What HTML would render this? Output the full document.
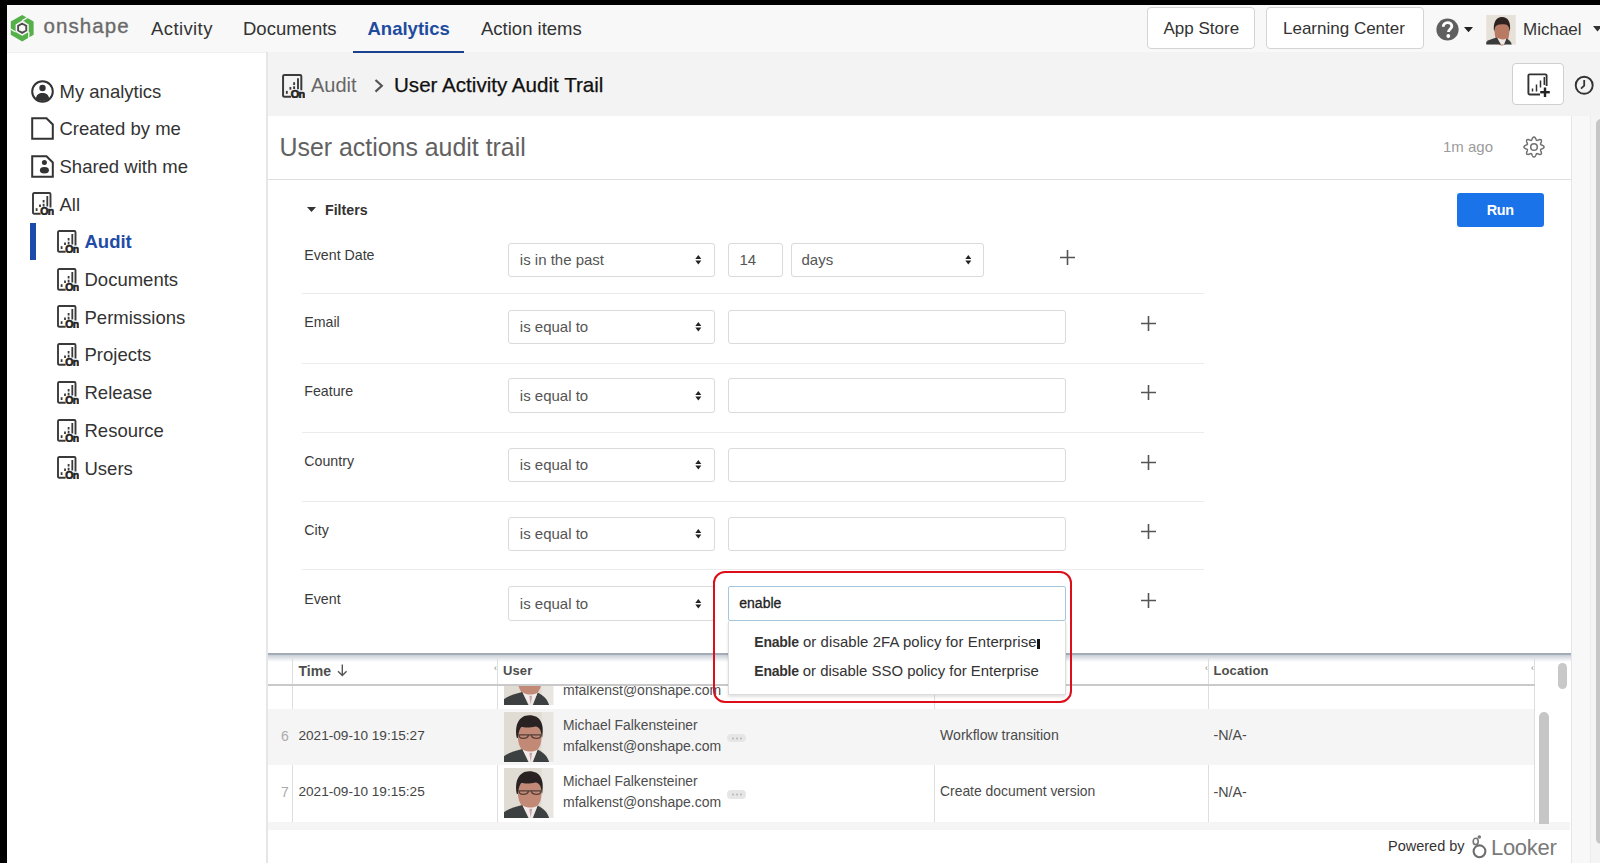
<!DOCTYPE html>
<html><head><meta charset="utf-8">
<style>
*{box-sizing:border-box;margin:0;padding:0}
html,body{width:1600px;height:863px;overflow:hidden;background:#fff;font-family:"Liberation Sans",sans-serif}
.a{position:absolute}
.t{position:absolute;white-space:nowrap;line-height:1}
svg{position:absolute;overflow:visible}
</style></head><body>
<!-- black frame -->
<div class="a" style="left:0;top:0;width:1600px;height:5px;background:#000"></div>
<div class="a" style="left:0;top:0;width:7px;height:863px;background:#000"></div>

<!-- header -->
<div class="a" style="left:7px;top:5px;width:1593px;height:47px;background:#f8f8f8"></div>
<div class="a" style="left:7px;top:52px;width:260px;height:1px;background:#efefef"></div>

<!-- onshape logo -->
<svg style="left:9.3px;top:14.8px" width="26.4" height="26.4" viewBox="-13.2 -13.2 26.4 26.4">
  <path fill="#55b04a" fill-rule="evenodd" d="M0,-13.2 L11.43,-6.6 L11.43,6.6 L0,13.2 L-11.43,6.6 L-11.43,-6.6Z M0,-7.6 L6.58,-3.8 L6.58,3.8 L0,7.6 L-6.58,3.8 L-6.58,-3.8Z"/>
  <g stroke="#f8f8f8" stroke-width="1.3">
    <line x1="0" y1="-7.6" x2="7.5" y2="-11.9"/>
    <line x1="-6.58" y1="3.8" x2="-13" y2="0.1"/>
    <line x1="6.58" y1="3.8" x2="6.58" y2="12"/>
  </g>
  <path d="M0,-4.7 L4.07,-2.35 L4.07,2.35 L0,4.7 L-4.07,2.35 L-4.07,-2.35Z" fill="none" stroke="#4d4d4d" stroke-width="1.9"/>
  <line x1="0.6" y1="-5.3" x2="2.5" y2="-6.4" stroke="#f8f8f8" stroke-width="1.2"/>
</svg>
<div class="t" style="left:43.5px;top:15.6px;font-size:20.5px;color:#6b6b6b;letter-spacing:1.1px;-webkit-text-stroke:0.35px #6b6b6b">onshape</div>

<div class="t" style="left:151px;top:19.6px;font-size:18.5px;color:#333;letter-spacing:0.4px">Activity</div>
<div class="t" style="left:243px;top:19.6px;font-size:18.5px;color:#333">Documents</div>
<div class="t" style="left:367.5px;top:19.6px;font-size:18.5px;color:#1f4c9e;font-weight:bold">Analytics</div>
<div class="a" style="left:353px;top:50.5px;width:111px;height:2.5px;background:#1a4190"></div>
<div class="t" style="left:481px;top:19.6px;font-size:18.5px;color:#333">Action items</div>

<div class="a" style="left:1147px;top:7px;width:108px;height:41.5px;background:#fff;border:1px solid #d4d4d4;border-radius:4px"></div>
<div class="t" style="left:1163.5px;top:19.6px;font-size:17px;color:#333">App Store</div>
<div class="a" style="left:1266px;top:7px;width:157.5px;height:41.5px;background:#fff;border:1px solid #d4d4d4;border-radius:4px"></div>
<div class="t" style="left:1283px;top:19.6px;font-size:17px;color:#333">Learning Center</div>

<!-- help icon -->
<svg style="left:1436px;top:18px" width="23" height="23" viewBox="0 0 23 23">
  <circle cx="11.5" cy="11.5" r="11.1" fill="#5f5f5f"/>
  <path d="M7.3,8.8 C7.3,6.2 9.2,4.6 11.6,4.6 C14,4.6 15.8,6.1 15.8,8.3 C15.8,10.8 12.5,11.2 12.5,14" fill="none" stroke="#fff" stroke-width="2.9"/>
  <circle cx="12.3" cy="18" r="1.9" fill="#fff"/>
</svg>
<svg style="left:1464px;top:26.6px" width="10" height="6"><polygon points="0,0 9,0 4.5,5.2" fill="#222"/></svg>
<!-- avatar small -->
<svg style="left:1486px;top:14.5px" width="30" height="29.5" viewBox="0 0 30 30">
  <rect width="30" height="30" fill="#e6e1d9"/>
  <path d="M8.5,15 C8.5,24 11,31 16,31 C21,31 23.5,24 23.5,15 C22,9 20,8 16,8 C12,8 10,9 8.5,15Z" fill="#b97a64"/>
  <path d="M8,17 C6.5,8 10,2 16,2 C22,2 25.5,7 24,17 L23,13 C22,10 20,9 16,9.5 C12,9.5 10,10.5 9,13Z" fill="#2e2320"/>
  <path d="M0,30 V27.5 C3,25 7,24 11,23 L15,30Z" fill="#3a3c3b"/>
  <path d="M26,30 C25,27 23,25 20.5,24 L18,30Z" fill="#3a3c3b"/>
  <path d="M11,23 L15,30 L18,30 L20.5,24 C18,25.5 13,25 11,23Z" fill="#eee8e6"/>
</svg>
<div class="t" style="left:1523px;top:20.9px;font-size:17px;color:#333">Michael</div>
<svg style="left:1593px;top:26px" width="10" height="6"><polygon points="0,0 9,0 4.5,5.5" fill="#333"/></svg>

<!-- sidebar -->
<div class="a" style="left:266px;top:52px;width:2px;height:811px;background:#e4e6ea"></div>

<!-- breadcrumb bar -->
<div class="a" style="left:268px;top:52px;width:1332px;height:63.5px;background:#f3f3f3"></div>
<div class="a" style="left:353px;top:50.5px;width:111px;height:2.5px;background:#1a4190"></div>

<!-- content area right gutter -->
<div class="a" style="left:1571px;top:115.5px;width:29px;height:748px;background:#f8f8f8"></div>
<div class="a" style="left:1571px;top:115.5px;width:1px;height:748px;background:#e6e6e6"></div>
<div class="a" style="left:1590px;top:115.5px;width:1px;height:748px;background:#ececec"></div>
<div class="a" style="left:1591px;top:115.5px;width:9px;height:748px;background:#f4f4f4"></div>
<div class="a" style="left:1595.5px;top:119px;width:10px;height:725px;background:#c6c6c6;border-radius:5px"></div>


<!-- icon defs -->
<svg width="0" height="0" style="position:absolute">
 <defs>
  <symbol id="chart" viewBox="0 0 22 23">
   <path d="M8.6,21.7 H2.2 Q1,21.7 1,20.5 V2.2 Q1,1 2.2,1 H17.3 Q18.5,1 18.5,2.2 V15.5" fill="none" stroke="#3a3a3a" stroke-width="1.9"/>
   <g stroke="#3a3a3a" stroke-width="1.8" fill="none">
    <line x1="4.6" y1="16.2" x2="4.6" y2="19"/>
    <line x1="8" y1="12.5" x2="8" y2="15"/>
    <line x1="11.6" y1="8" x2="11.6" y2="14.5" stroke-dasharray="2.6 1.2"/>
    <line x1="15.3" y1="4" x2="15.3" y2="14.5"/>
   </g>
   <text x="8.3" y="23" style="font-family:'Liberation Sans';font-weight:700;font-size:10.5px;letter-spacing:-0.6px" fill="#222" stroke="#222" stroke-width="0.6">On</text>
  </symbol>
 </defs>
</svg>

<!-- sidebar items -->
<svg style="left:30.5px;top:79.5px" width="23" height="23" viewBox="0 0 23 23">
  <circle cx="11.5" cy="11.5" r="10.3" fill="none" stroke="#333" stroke-width="2"/>
  <circle cx="11.5" cy="8" r="3.2" fill="#333"/>
  <path d="M4.8,18.6 C5.5,14.5 8,13 11.5,13 C15,13 17.5,14.5 18.2,18.6 C16.5,20.3 14,21 11.5,21 C9,21 6.5,20.3 4.8,18.6Z" fill="#333"/>
</svg>
<div class="t" style="left:59.5px;top:82.5px;font-size:18.5px;color:#333">My analytics</div>

<svg style="left:30.5px;top:117px" width="23" height="23" viewBox="0 0 23 23">
  <path d="M1.2,1.2 H15.5 L21.8,7.5 V21.8 H1.2Z" fill="none" stroke="#333" stroke-width="2"/>
</svg>
<div class="t" style="left:59.5px;top:120.2px;font-size:18.5px;color:#333">Created by me</div>

<svg style="left:30.5px;top:154.5px" width="23" height="23" viewBox="0 0 23 23">
  <path d="M1.2,1.2 H15.5 L21.8,7.5 V21.8 H1.2Z" fill="none" stroke="#333" stroke-width="2"/>
  <circle cx="13.4" cy="7.6" r="2.5" fill="#333"/>
  <ellipse cx="13.4" cy="15.2" rx="4.5" ry="3.2" fill="#333"/>
</svg>
<div class="t" style="left:59.5px;top:157.9px;font-size:18.5px;color:#333">Shared with me</div>

<svg style="left:32px;top:192px" width="22" height="23"><use href="#chart"/></svg>
<div class="t" style="left:59.5px;top:195.6px;font-size:18.5px;color:#333">All</div>

<div class="a" style="left:29.5px;top:222.5px;width:6.5px;height:37px;background:#1a4bab"></div>
<svg style="left:57px;top:230px" width="22" height="23"><use href="#chart"/></svg>
<div class="t" style="left:84.5px;top:233.3px;font-size:18.5px;color:#1f4ca6;font-weight:bold">Audit</div>

<svg style="left:57px;top:267.7px" width="22" height="23"><use href="#chart"/></svg>
<div class="t" style="left:84.5px;top:271px;font-size:18.5px;color:#333">Documents</div>
<svg style="left:57px;top:305.4px" width="22" height="23"><use href="#chart"/></svg>
<div class="t" style="left:84.5px;top:308.7px;font-size:18.5px;color:#333">Permissions</div>
<svg style="left:57px;top:343.1px" width="22" height="23"><use href="#chart"/></svg>
<div class="t" style="left:84.5px;top:346.4px;font-size:18.5px;color:#333">Projects</div>
<svg style="left:57px;top:380.8px" width="22" height="23"><use href="#chart"/></svg>
<div class="t" style="left:84.5px;top:384.1px;font-size:18.5px;color:#333">Release</div>
<svg style="left:57px;top:418.5px" width="22" height="23"><use href="#chart"/></svg>
<div class="t" style="left:84.5px;top:421.8px;font-size:18.5px;color:#333">Resource</div>
<svg style="left:57px;top:456.2px" width="22" height="23"><use href="#chart"/></svg>
<div class="t" style="left:84.5px;top:459.5px;font-size:18.5px;color:#333">Users</div>

<!-- breadcrumb -->
<svg style="left:282px;top:74.3px" width="23" height="24" viewBox="0 0 22 23"><use href="#chart"/></svg>
<div class="t" style="left:311px;top:74.7px;font-size:20px;color:#666">Audit</div>
<svg style="left:373px;top:78px" width="12" height="16" viewBox="0 0 12 16">
  <path d="M2.5,2 L8.8,7.8 L2.5,13.6" fill="none" stroke="#555" stroke-width="2.2"/>
</svg>
<div class="t" style="left:394px;top:75.2px;font-size:20.6px;color:#111;-webkit-text-stroke:0.25px #111">User Activity Audit Trail</div>

<!-- add to board button -->
<div class="a" style="left:1512px;top:63px;width:51.5px;height:42px;background:#fff;border:1px solid #cfcfcf;border-radius:4px"></div>
<svg style="left:1527px;top:73px" width="24" height="25" viewBox="0 0 24 25">
  <path d="M13,21.5 H2.6 Q1.4,21.5 1.4,20.3 V2.6 Q1.4,1.4 2.6,1.4 H18.4 Q19.6,1.4 19.6,2.6 V13" fill="none" stroke="#333" stroke-width="1.9"/>
  <g stroke="#333" stroke-width="1.5"><line x1="5.5" y1="15.5" x2="5.5" y2="18.5"/><line x1="9.5" y1="11.5" x2="9.5" y2="18.5"/><line x1="13.5" y1="7.5" x2="13.5" y2="14.5"/><line x1="17.3" y1="4" x2="17.3" y2="12"/></g>
  <g stroke="#222" stroke-width="2.4"><line x1="18" y1="14.5" x2="18" y2="24"/><line x1="13.2" y1="19.2" x2="22.8" y2="19.2"/></g>
</svg>
<svg style="left:1573.5px;top:76.2px" width="21" height="19" viewBox="0 0 21 19">
  <circle cx="10.2" cy="9.3" r="8.5" fill="none" stroke="#333" stroke-width="1.9"/>
  <path d="M10.2,4 V9.6 L7,12.6" fill="none" stroke="#333" stroke-width="1.8"/>
</svg>

<!-- card header -->
<div class="t" style="left:279.5px;top:135.2px;font-size:24.9px;color:#616161">User actions audit trail</div>
<div class="t" style="left:1443px;top:139px;font-size:15px;color:#9c9c9c">1m ago</div>
<svg style="left:1522px;top:135px" width="24" height="24" viewBox="0 0 24 24"><path d="M22.05,12.00 L22.01,12.26 L21.91,12.52 L21.74,12.77 L21.52,13.00 L21.25,13.22 L20.94,13.42 L20.61,13.59 L20.26,13.76 L19.93,13.90 L19.61,14.04 L19.32,14.17 L19.06,14.30 L18.86,14.43 L18.70,14.57 L18.61,14.74 L18.56,14.92 L18.57,15.13 L18.62,15.37 L18.71,15.64 L18.82,15.94 L18.95,16.26 L19.09,16.60 L19.21,16.96 L19.32,17.32 L19.40,17.68 L19.44,18.02 L19.43,18.35 L19.38,18.64 L19.27,18.90 L19.11,19.11 L18.90,19.27 L18.64,19.38 L18.35,19.43 L18.02,19.44 L17.68,19.40 L17.32,19.32 L16.96,19.21 L16.60,19.09 L16.26,18.95 L15.94,18.82 L15.64,18.71 L15.37,18.62 L15.13,18.57 L14.92,18.56 L14.74,18.61 L14.57,18.70 L14.43,18.86 L14.30,19.06 L14.17,19.32 L14.04,19.61 L13.90,19.93 L13.76,20.26 L13.59,20.61 L13.42,20.94 L13.22,21.25 L13.00,21.52 L12.77,21.74 L12.52,21.91 L12.26,22.01 L12.00,22.05 L11.74,22.01 L11.48,21.91 L11.23,21.74 L11.00,21.52 L10.78,21.25 L10.58,20.94 L10.41,20.61 L10.24,20.26 L10.10,19.93 L9.96,19.61 L9.83,19.32 L9.70,19.06 L9.57,18.86 L9.43,18.70 L9.26,18.61 L9.08,18.56 L8.87,18.57 L8.63,18.62 L8.36,18.71 L8.06,18.82 L7.74,18.95 L7.40,19.09 L7.04,19.21 L6.68,19.32 L6.32,19.40 L5.98,19.44 L5.65,19.43 L5.36,19.38 L5.10,19.27 L4.89,19.11 L4.73,18.90 L4.62,18.64 L4.57,18.35 L4.56,18.02 L4.60,17.68 L4.68,17.32 L4.79,16.96 L4.91,16.60 L5.05,16.26 L5.18,15.94 L5.29,15.64 L5.38,15.37 L5.43,15.13 L5.44,14.92 L5.39,14.74 L5.30,14.57 L5.14,14.43 L4.94,14.30 L4.68,14.17 L4.39,14.04 L4.07,13.90 L3.74,13.76 L3.39,13.59 L3.06,13.42 L2.75,13.22 L2.48,13.00 L2.26,12.77 L2.09,12.52 L1.99,12.26 L1.95,12.00 L1.99,11.74 L2.09,11.48 L2.26,11.23 L2.48,11.00 L2.75,10.78 L3.06,10.58 L3.39,10.41 L3.74,10.24 L4.07,10.10 L4.39,9.96 L4.68,9.83 L4.94,9.70 L5.14,9.57 L5.30,9.43 L5.39,9.26 L5.44,9.08 L5.43,8.87 L5.38,8.63 L5.29,8.36 L5.18,8.06 L5.05,7.74 L4.91,7.40 L4.79,7.04 L4.68,6.68 L4.60,6.32 L4.56,5.98 L4.57,5.65 L4.62,5.36 L4.73,5.10 L4.89,4.89 L5.10,4.73 L5.36,4.62 L5.65,4.57 L5.98,4.56 L6.32,4.60 L6.68,4.68 L7.04,4.79 L7.40,4.91 L7.74,5.05 L8.06,5.18 L8.36,5.29 L8.63,5.38 L8.87,5.43 L9.08,5.44 L9.26,5.39 L9.43,5.30 L9.57,5.14 L9.70,4.94 L9.83,4.68 L9.96,4.39 L10.10,4.07 L10.24,3.74 L10.41,3.39 L10.58,3.06 L10.78,2.75 L11.00,2.48 L11.23,2.26 L11.48,2.09 L11.74,1.99 L12.00,1.95 L12.26,1.99 L12.52,2.09 L12.77,2.26 L13.00,2.48 L13.22,2.75 L13.42,3.06 L13.59,3.39 L13.76,3.74 L13.90,4.07 L14.04,4.39 L14.17,4.68 L14.30,4.94 L14.43,5.14 L14.57,5.30 L14.74,5.39 L14.92,5.44 L15.13,5.43 L15.37,5.38 L15.64,5.29 L15.94,5.18 L16.26,5.05 L16.60,4.91 L16.96,4.79 L17.32,4.68 L17.68,4.60 L18.02,4.56 L18.35,4.57 L18.64,4.62 L18.90,4.73 L19.11,4.89 L19.27,5.10 L19.38,5.36 L19.43,5.65 L19.44,5.98 L19.40,6.32 L19.32,6.68 L19.21,7.04 L19.09,7.40 L18.95,7.74 L18.82,8.06 L18.71,8.36 L18.62,8.63 L18.57,8.87 L18.56,9.08 L18.61,9.26 L18.70,9.43 L18.86,9.57 L19.06,9.70 L19.32,9.83 L19.61,9.96 L19.93,10.10 L20.26,10.24 L20.61,10.41 L20.94,10.58 L21.25,10.78 L21.52,11.00 L21.74,11.23 L21.91,11.48 L22.01,11.74Z" fill="none" stroke="#707070" stroke-width="1.5"/><circle cx="12" cy="12" r="3.3" fill="none" stroke="#707070" stroke-width="1.5"/></svg>
<div class="a" style="left:268px;top:178.5px;width:1303px;height:1.5px;background:#dedede"></div>


<!-- defs 2 -->
<svg width="0" height="0" style="position:absolute">
 <defs>
  <filter id="soft" x="-5%" y="-5%" width="110%" height="110%"><feGaussianBlur stdDeviation="0.45"/></filter>
  <symbol id="face" viewBox="0 0 50 50">
   <g filter="url(#soft)">
   <rect x="-2" y="-2" width="54" height="54" fill="#e1dcd3"/>
   <rect x="38" y="-2" width="14" height="54" fill="#e9e6e1"/>
   <path d="M14,22 C13.5,33 17.5,41.5 26,41.5 C34.5,41.5 38.5,33 38,22 C36.5,15 33,12.5 26,12.5 C19,12.5 15.5,15 14,22Z" fill="#c28a76"/>
   <path d="M13,26 C10.5,14 14.5,3 25.5,3 C37,3 41,12 38.5,26 L37.5,21 C36.5,16 33.5,14.5 31.5,14.5 C26.5,16 20,15.5 17.5,15 C15.5,17.5 14.5,21 14,26Z" fill="#2a2320"/>
   <path d="M14.5,22.8 H38 M15,22.8 C15,27.5 23,27.5 24.8,23.5 M27.5,23.5 C29,27.5 37.5,27.5 37.5,22.8" fill="none" stroke="#2e2623" stroke-width="1.3" opacity="0.75"/>
   <path d="M-2,52 V46 C3,41.5 10,39 18.5,37 L25.5,52Z" fill="#3e403f"/>
   <path d="M46,52 C44.5,44.5 40,40.5 34,37.5 L28.5,52Z" fill="#3e403f"/>
   <path d="M18.5,37 L25.5,50 L28.5,50 L34,37.5 C30.5,40.5 22.5,40.5 18.5,37Z" fill="#f1ebea"/>
   <path d="M25.5,41 L27,50 L28.5,41Z" fill="#c9a4a8"/>
   </g>
  </symbol>
 </defs>
</svg>

<!-- Filters -->
<svg style="left:306.5px;top:207.3px" width="9" height="5"><polygon points="0,0 9,0 4.5,5" fill="#333"/></svg>
<div class="t" style="left:325px;top:203.1px;font-size:14.2px;color:#333;font-weight:bold">Filters</div>
<div class="a" style="left:1456.5px;top:192.5px;width:87.5px;height:34.5px;background:#1a73e8;border-radius:3px"></div>
<div class="t" style="left:1456.5px;width:87.5px;text-align:center;top:202.6px;font-size:14.4px;color:#fff;font-weight:bold;letter-spacing:-0.3px">Run</div>

<div class="t" style="left:304.3px;top:248.3px;font-size:14.2px;color:#3a3a3a">Event Date</div>
<div class="t" style="left:304.3px;top:315.2px;font-size:14.2px;color:#3a3a3a">Email</div>
<div class="t" style="left:304.3px;top:383.9px;font-size:14.2px;color:#3a3a3a">Feature</div>
<div class="t" style="left:304.3px;top:454.3px;font-size:14.2px;color:#3a3a3a">Country</div>
<div class="t" style="left:304.3px;top:523.2px;font-size:14.2px;color:#3a3a3a">City</div>
<div class="t" style="left:304.3px;top:592.2px;font-size:14.2px;color:#3a3a3a">Event</div>

<div class="a" style="left:301.5px;top:293px;width:902px;height:1px;background:#ececec"></div>
<div class="a" style="left:301.5px;top:362.5px;width:902px;height:1px;background:#ececec"></div>
<div class="a" style="left:301.5px;top:432.2px;width:902px;height:1px;background:#ececec"></div>
<div class="a" style="left:301.5px;top:501.2px;width:902px;height:1px;background:#ececec"></div>
<div class="a" style="left:301.5px;top:569.3px;width:902px;height:1px;background:#ececec"></div>
<div class="a" style="left:508.4px;top:243px;width:206.3px;height:34.3px;border:1px solid #dadada;border-radius:3px;background:#fff"></div>
<div class="t" style="left:519.8px;top:252.25px;font-size:15px;color:#555">is in the past</div>
<svg style="left:695px;top:255.40px" width="7" height="10"><polygon points="0.3,4 6.3,4 3.3,0" fill="#222"/><polygon points="0.3,5.6 6.3,5.6 3.3,9.6" fill="#222"/></svg>
<div class="a" style="left:728.4px;top:243px;width:55.1px;height:34.3px;border:1px solid #dadada;border-radius:3px;background:#fff"></div>
<div class="t" style="left:739.5px;top:252.25px;font-size:15px;color:#555">14</div>
<div class="a" style="left:790.8px;top:243px;width:193.6px;height:34.3px;border:1px solid #dadada;border-radius:3px;background:#fff"></div>
<div class="t" style="left:801.5px;top:252.25px;font-size:15px;color:#555">days</div>
<svg style="left:964.5px;top:255.40px" width="7" height="10"><polygon points="0.3,4 6.3,4 3.3,0" fill="#222"/><polygon points="0.3,5.6 6.3,5.6 3.3,9.6" fill="#222"/></svg>
<svg style="left:1058.5px;top:248.5px" width="17" height="17"><path d="M8.5,1 V16 M1,8.5 H16" stroke="#555" stroke-width="1.6"/></svg>
<div class="a" style="left:508.4px;top:309.5px;width:206.3px;height:34.3px;border:1px solid #dadada;border-radius:3px;background:#fff"></div>
<div class="t" style="left:519.8px;top:318.75px;font-size:15px;color:#555">is equal to</div>
<svg style="left:695px;top:321.90px" width="7" height="10"><polygon points="0.3,4 6.3,4 3.3,0" fill="#222"/><polygon points="0.3,5.6 6.3,5.6 3.3,9.6" fill="#222"/></svg>
<div class="a" style="left:728.4px;top:309.5px;width:337.4px;height:34.3px;border:1px solid #dadada;border-radius:3px;background:#fff"></div>
<svg style="left:1140px;top:315.00px" width="17" height="17"><path d="M8.5,1 V16 M1,8.5 H16" stroke="#555" stroke-width="1.6"/></svg>
<div class="a" style="left:508.4px;top:378.4px;width:206.3px;height:34.3px;border:1px solid #dadada;border-radius:3px;background:#fff"></div>
<div class="t" style="left:519.8px;top:387.65px;font-size:15px;color:#555">is equal to</div>
<svg style="left:695px;top:390.80px" width="7" height="10"><polygon points="0.3,4 6.3,4 3.3,0" fill="#222"/><polygon points="0.3,5.6 6.3,5.6 3.3,9.6" fill="#222"/></svg>
<div class="a" style="left:728.4px;top:378.4px;width:337.4px;height:34.3px;border:1px solid #dadada;border-radius:3px;background:#fff"></div>
<svg style="left:1140px;top:383.90px" width="17" height="17"><path d="M8.5,1 V16 M1,8.5 H16" stroke="#555" stroke-width="1.6"/></svg>
<div class="a" style="left:508.4px;top:448px;width:206.3px;height:34.3px;border:1px solid #dadada;border-radius:3px;background:#fff"></div>
<div class="t" style="left:519.8px;top:457.25px;font-size:15px;color:#555">is equal to</div>
<svg style="left:695px;top:460.40px" width="7" height="10"><polygon points="0.3,4 6.3,4 3.3,0" fill="#222"/><polygon points="0.3,5.6 6.3,5.6 3.3,9.6" fill="#222"/></svg>
<div class="a" style="left:728.4px;top:448px;width:337.4px;height:34.3px;border:1px solid #dadada;border-radius:3px;background:#fff"></div>
<svg style="left:1140px;top:453.50px" width="17" height="17"><path d="M8.5,1 V16 M1,8.5 H16" stroke="#555" stroke-width="1.6"/></svg>
<div class="a" style="left:508.4px;top:517px;width:206.3px;height:34.3px;border:1px solid #dadada;border-radius:3px;background:#fff"></div>
<div class="t" style="left:519.8px;top:526.25px;font-size:15px;color:#555">is equal to</div>
<svg style="left:695px;top:529.40px" width="7" height="10"><polygon points="0.3,4 6.3,4 3.3,0" fill="#222"/><polygon points="0.3,5.6 6.3,5.6 3.3,9.6" fill="#222"/></svg>
<div class="a" style="left:728.4px;top:517px;width:337.4px;height:34.3px;border:1px solid #dadada;border-radius:3px;background:#fff"></div>
<svg style="left:1140px;top:522.50px" width="17" height="17"><path d="M8.5,1 V16 M1,8.5 H16" stroke="#555" stroke-width="1.6"/></svg>
<div class="a" style="left:508.4px;top:586.3px;width:206.3px;height:34.3px;border:1px solid #dadada;border-radius:3px;background:#fff"></div>
<div class="t" style="left:519.8px;top:595.55px;font-size:15px;color:#555">is equal to</div>
<svg style="left:695px;top:598.70px" width="7" height="10"><polygon points="0.3,4 6.3,4 3.3,0" fill="#222"/><polygon points="0.3,5.6 6.3,5.6 3.3,9.6" fill="#222"/></svg>
<svg style="left:1140px;top:591.80px" width="17" height="17"><path d="M8.5,1 V16 M1,8.5 H16" stroke="#555" stroke-width="1.6"/></svg>


<!-- table area -->
<div class="a" style="left:268px;top:652.8px;width:1303px;height:2.6px;background:#a3abb6"></div>
<div class="a" style="left:268px;top:655.4px;width:1303px;height:7px;background:linear-gradient(#c9cfd7,rgba(240,244,248,0))"></div>
<!-- header -->
<div class="a" style="left:292px;top:656px;width:1px;height:166px;background:#dedede"></div>
<div class="a" style="left:497.2px;top:656px;width:1px;height:166px;background:#dedede"></div>
<div class="a" style="left:934.2px;top:656px;width:1px;height:166px;background:#dedede"></div>
<div class="a" style="left:1208px;top:656px;width:1px;height:166px;background:#dedede"></div>
<div class="a" style="left:1534px;top:656px;width:1px;height:166px;background:#dedede"></div>
<div class="a" style="left:268px;top:683.8px;width:1266.5px;height:1.8px;background:#c9c9c9"></div>
<div class="t" style="left:298.5px;top:663.5px;font-size:14px;color:#4d4d4d;font-weight:bold">Time</div>
<svg style="left:336.5px;top:664px" width="11" height="13"><path d="M5.3,0.5 V11.5 M1,7.2 L5.3,11.5 L9.6,7.2" fill="none" stroke="#555" stroke-width="1.4"/></svg>
<div class="t" style="left:503px;top:663.5px;font-size:13px;color:#4d4d4d;font-weight:bold;letter-spacing:0.1px">User</div>
<div class="t" style="left:1213.5px;top:663.5px;font-size:13px;color:#4d4d4d;font-weight:bold;letter-spacing:0.1px">Location</div>
<div class="t" style="left:494px;top:664px;font-size:9px;color:#888">&#8249;</div>
<div class="t" style="left:1205px;top:664px;font-size:9px;color:#888">&#8249;</div>
<div class="t" style="left:1531px;top:664px;font-size:9px;color:#888">&#8249;</div>

<!-- partial row (rows 685-708) -->
<div class="a" style="left:268px;top:685.6px;width:1266px;height:22.8px;overflow:hidden">
  <svg style="left:235.5px;top:-30.5px" width="49.5" height="50"><use href="#face"/></svg>
  <div class="t" style="left:295px;top:-3px;font-size:14px;color:#4d4d4d">mfalkenst@onshape.com</div>
</div>
<!-- row 6 -->
<div class="a" style="left:268px;top:708.5px;width:1266px;height:56px;background:#f5f5f5"></div>
<div class="t" style="left:281px;top:728.5px;font-size:14px;color:#aaa">6</div>
<div class="t" style="left:298.5px;top:728.5px;font-size:13.6px;color:#444">2021-09-10 19:15:27</div>
<svg style="left:503.5px;top:711.7px" width="49.5" height="50"><use href="#face"/></svg>
<div class="t" style="left:563px;top:718.5px;font-size:13.85px;color:#4d4d4d">Michael Falkensteiner</div>
<div class="t" style="left:563px;top:738.7px;font-size:14px;color:#4d4d4d">mfalkenst@onshape.com</div>
<div class="a" style="left:727px;top:733.7px;width:18.5px;height:8.5px;background:#e6e6e6;border-radius:4px"></div>
<svg style="left:729.5px;top:736.5px" width="14" height="3"><circle cx="3" cy="1.5" r="1" fill="#b5b5b5"/><circle cx="7" cy="1.5" r="1" fill="#b5b5b5"/><circle cx="11" cy="1.5" r="1" fill="#b5b5b5"/></svg>
<div class="t" style="left:940px;top:727.5px;font-size:14.1px;color:#4a4a4a">Workflow transition</div>
<div class="t" style="left:1213.5px;top:728px;font-size:14.3px;color:#4a4a4a">-N/A-</div>
<!-- row 7 -->
<div class="t" style="left:281px;top:784.6px;font-size:14px;color:#aaa">7</div>
<div class="t" style="left:298.5px;top:784.6px;font-size:13.6px;color:#444">2021-09-10 19:15:25</div>
<svg style="left:503.5px;top:768.3px" width="49.5" height="50"><use href="#face"/></svg>
<div class="t" style="left:563px;top:774.7px;font-size:13.85px;color:#4d4d4d">Michael Falkensteiner</div>
<div class="t" style="left:563px;top:795px;font-size:14px;color:#4d4d4d">mfalkenst@onshape.com</div>
<div class="a" style="left:727px;top:790px;width:18.5px;height:8.5px;background:#e6e6e6;border-radius:4px"></div>
<svg style="left:729.5px;top:792.8px" width="14" height="3"><circle cx="3" cy="1.5" r="1" fill="#b5b5b5"/><circle cx="7" cy="1.5" r="1" fill="#b5b5b5"/><circle cx="11" cy="1.5" r="1" fill="#b5b5b5"/></svg>
<div class="t" style="left:940px;top:785.1px;font-size:13.9px;color:#4a4a4a">Create document version</div>
<div class="t" style="left:1213.5px;top:785.1px;font-size:14.3px;color:#4a4a4a">-N/A-</div>
<!-- bottom strip -->
<div class="a" style="left:268px;top:822.2px;width:1302px;height:8px;background:#f5f5f5"></div>
<!-- table scrollbars -->
<div class="a" style="left:1538.7px;top:712.3px;width:10.8px;height:111.5px;background:#c6c6c6;border-radius:5px 5px 0 0"></div>
<div class="a" style="left:1557.6px;top:662.6px;width:9.8px;height:26px;background:#c8c8c8;border-radius:5px"></div>
<!-- footer -->
<div class="t" style="left:1388px;top:839.4px;font-size:14.5px;color:#333">Powered by</div>
<svg style="left:1470px;top:834px" width="20" height="26" viewBox="0 0 20 26">
  <circle cx="9.5" cy="17.3" r="5.9" fill="none" stroke="#6e6e6e" stroke-width="2.1"/>
  <ellipse cx="5.7" cy="7.4" rx="2.5" ry="3.2" fill="none" stroke="#777" stroke-width="1.6"/>
  <circle cx="9.3" cy="3" r="1.8" fill="#777"/>
</svg>
<div class="t" style="left:1491px;top:836.5px;font-size:22px;color:#7a7a7a;letter-spacing:-0.3px">Looker</div>

<!-- Event focused input -->
<div class="a" style="left:728px;top:586.3px;width:338.2px;height:35px;border:1px solid #a6c6de;border-radius:2px;background:#fff"></div>
<div class="t" style="left:739.3px;top:595.6px;font-size:14px;color:#222;-webkit-text-stroke:0.3px #222">enable</div>
<!-- dropdown -->
<div class="a" style="left:728px;top:621.3px;width:338.2px;height:73.5px;background:#fff;border:1px solid #dcdcdc;border-top:none;box-shadow:0 2px 3px rgba(0,0,0,0.12)"></div>
<div class="t" style="left:754.3px;top:635.3px;font-size:14.9px;color:#333;letter-spacing:0.1px"><b style="font-size:14px;letter-spacing:-0.25px">Enable</b> or disable 2FA policy for Enterprise</div>
<div class="a" style="left:1036.5px;top:638.7px;width:3.5px;height:10px;background:#111"></div>
<div class="t" style="left:754.3px;top:663.5px;font-size:14.9px;color:#333"><b style="font-size:14px;letter-spacing:-0.25px">Enable</b> or disable SSO policy for Enterprise</div>
<!-- red annotation -->
<div class="a" style="left:713.3px;top:570.8px;width:358.4px;height:132.4px;border:2.9px solid #dc0e1a;border-radius:12px"></div>

</body></html>
